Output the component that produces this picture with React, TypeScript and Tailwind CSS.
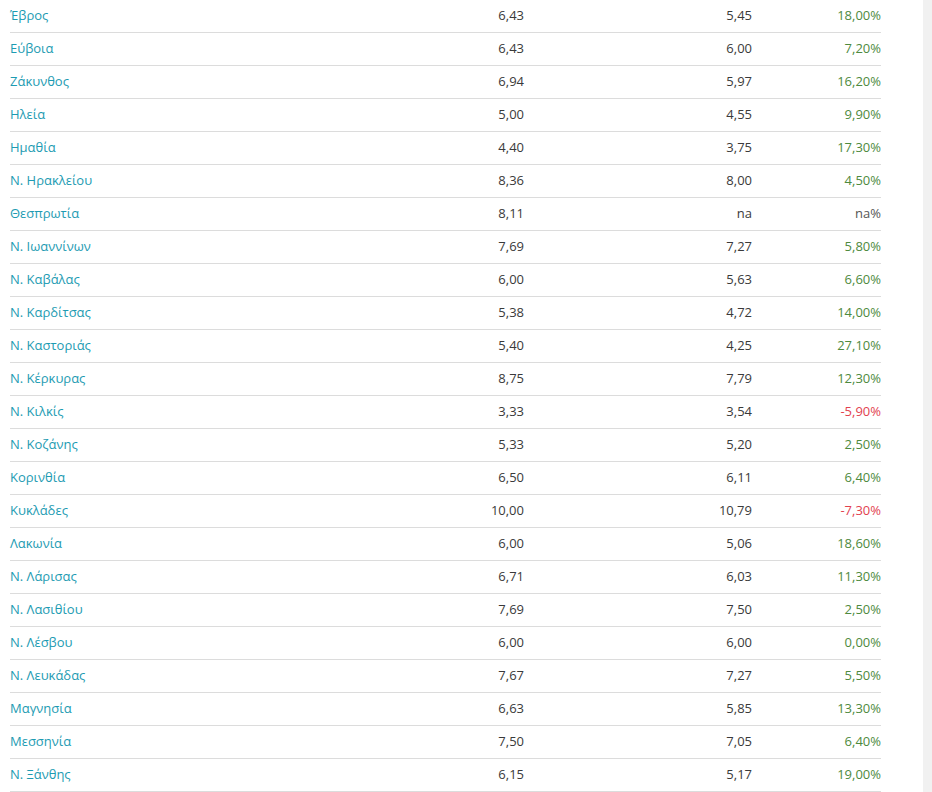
import React from "react";

type Row = { name: string; a: string; b: string; change: string };

const rows: Row[] = [
  { name: "Έβρος", a: "6,43", b: "5,45", change: "18,00%" },
  { name: "Εύβοια", a: "6,43", b: "6,00", change: "7,20%" },
  { name: "Ζάκυνθος", a: "6,94", b: "5,97", change: "16,20%" },
  { name: "Ηλεία", a: "5,00", b: "4,55", change: "9,90%" },
  { name: "Ημαθία", a: "4,40", b: "3,75", change: "17,30%" },
  { name: "Ν. Ηρακλείου", a: "8,36", b: "8,00", change: "4,50%" },
  { name: "Θεσπρωτία", a: "8,11", b: "na", change: "na%" },
  { name: "Ν. Ιωαννίνων", a: "7,69", b: "7,27", change: "5,80%" },
  { name: "Ν. Καβάλας", a: "6,00", b: "5,63", change: "6,60%" },
  { name: "Ν. Καρδίτσας", a: "5,38", b: "4,72", change: "14,00%" },
  { name: "Ν. Καστοριάς", a: "5,40", b: "4,25", change: "27,10%" },
  { name: "Ν. Κέρκυρας", a: "8,75", b: "7,79", change: "12,30%" },
  { name: "Ν. Κιλκίς", a: "3,33", b: "3,54", change: "-5,90%" },
  { name: "Ν. Κοζάνης", a: "5,33", b: "5,20", change: "2,50%" },
  { name: "Κορινθία", a: "6,50", b: "6,11", change: "6,40%" },
  { name: "Κυκλάδες", a: "10,00", b: "10,79", change: "-7,30%" },
  { name: "Λακωνία", a: "6,00", b: "5,06", change: "18,60%" },
  { name: "Ν. Λάρισας", a: "6,71", b: "6,03", change: "11,30%" },
  { name: "Ν. Λασιθίου", a: "7,69", b: "7,50", change: "2,50%" },
  { name: "Ν. Λέσβου", a: "6,00", b: "6,00", change: "0,00%" },
  { name: "Ν. Λευκάδας", a: "7,67", b: "7,27", change: "5,50%" },
  { name: "Μαγνησία", a: "6,63", b: "5,85", change: "13,30%" },
  { name: "Μεσσηνία", a: "7,50", b: "7,05", change: "6,40%" },
  { name: "Ν. Ξάνθης", a: "6,15", b: "5,17", change: "19,00%" },
];

function changeColor(v: string) {
  if (v.startsWith("na")) return "text-[#555]";
  if (v.startsWith("-")) return "text-[#e2424f]";
  return "text-[#4e8a3e]";
}

export default function App() {
  return (
    <div
      className="flex h-[792px] w-full overflow-hidden bg-white"
      style={{ fontFamily: '"Open Sans", "Noto Sans", sans-serif' }}
    >
      <div className="flex-1 pl-[10px] pr-[42px]">
        {rows.map((r) => (
          <div
            key={r.name}
            className="grid h-[33px] grid-cols-[1fr_218px_228px_129px] items-center border-b border-[#dcdcdc] text-[13px]"
          >
            <span className="text-[#1d9bb2]">{r.name}</span>
            <span className="text-right text-[#3a3a3a]">{r.a}</span>
            <span className="text-right text-[#3a3a3a]">{r.b}</span>
            <span className={`text-right ${changeColor(r.change)}`}>{r.change}</span>
          </div>
        ))}
      </div>
      <div className="w-[9px] bg-[#f1f1f1]" />
    </div>
  );
}
